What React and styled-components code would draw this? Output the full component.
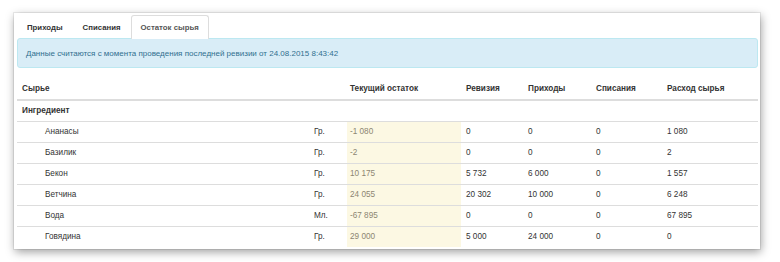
import styled, { createGlobalStyle } from "styled-components";
import { useState } from "react";

const GlobalStyle = createGlobalStyle`
  html, body {
    margin: 0;
    padding: 0;
    background: #fff;
  }
  body {
    font-family: "Liberation Sans", Arial, Helvetica, sans-serif;
    font-size: 8.2px;
    color: #333;
  }
`;

const Page = styled.div`
  padding: 13px 20px 0 14px;
  height: 262px;
  box-sizing: border-box;
  overflow: hidden;
`;

const Card = styled.div`
  width: 746px;
  height: 236px;
  box-sizing: border-box;
  background: #fff;
  padding: 0 2px 0 3px;
  overflow: hidden;
  box-shadow: 0 0 0 1px rgba(0, 0, 0, 0.07), 1px 3px 9px rgba(0, 0, 0, 0.38);
`;

const Tabs = styled.ul`
  display: flex;
  list-style: none;
  margin: 0;
  padding: 2px 0 0 0;
  height: 25px;
  box-sizing: border-box;
  gap: 0;
`;

const Tab = styled.li`
  display: flex;
  align-items: center;
  padding: 0 9px;
  font-size: 7.8px;
  font-weight: bold;
  cursor: pointer;
  color: ${(p) => (p.$active ? "#555" : "#333")};
  background: ${(p) => (p.$active ? "#fff" : "transparent")};
  border: 1px solid ${(p) => (p.$active ? "#ddd" : "transparent")};
  border-bottom: none;
  border-radius: 3px 3px 0 0;
  margin-bottom: -1px;
  position: relative;
  z-index: 1;
`;

const Alert = styled.div`
  height: 30px;
  box-sizing: border-box;
  display: flex;
  align-items: center;
  padding: 0 8px;
  font-size: 8px;
  background: #d9edf7;
  border: 1px solid #bce8f1;
  border-radius: 3px;
  color: #31708f;
`;

const Table = styled.table`
  width: 100%;
  margin-top: 10px;
  border-collapse: collapse;
  table-layout: fixed;
`;

const HeadCell = styled.th`
  height: 21px;
  padding: 0 0 0 ${(p) => p.$pad || 5}px;
  text-align: left;
  font-weight: bold;
  border-bottom: 2px solid #ddd;
  vertical-align: middle;
`;

const Row = styled.tr`
  height: 21px;
  border-top: 1px solid #ddd;
`;

const Cell = styled.td`
  padding: 0 0 0 ${(p) => p.$pad || 5}px;
  vertical-align: middle;
  white-space: nowrap;
  font-weight: ${(p) => (p.$bold ? "bold" : "normal")};
  background: ${(p) => (p.$warn ? "#fcf8e3" : "transparent")};
  color: ${(p) => (p.$warn ? "#8c8672" : "#333")};
`;

const tabs = ["Приходы", "Списания", "Остаток сырья"];

const rows = [
  { name: "Ананасы", unit: "Гр.", stock: "-1 080", rev: "0", inc: "0", off: "0", use: "1 080" },
  { name: "Базилик", unit: "Гр.", stock: "-2", rev: "0", inc: "0", off: "0", use: "2" },
  { name: "Бекон", unit: "Гр.", stock: "10 175", rev: "5 732", inc: "6 000", off: "0", use: "1 557" },
  { name: "Ветчина", unit: "Гр.", stock: "24 055", rev: "20 302", inc: "10 000", off: "0", use: "6 248" },
  { name: "Вода", unit: "Мл.", stock: "-67 895", rev: "0", inc: "0", off: "0", use: "67 895" },
  { name: "Говядина", unit: "Гр.", stock: "29 000", rev: "5 000", inc: "24 000", off: "0", use: "0" },
];

export default function App() {
  const [active, setActive] = useState(2);

  return (
    <Page>
      <GlobalStyle />
      <Card>
        <Tabs>
          {tabs.map((t, i) => (
            <Tab key={t} $active={i === active} onClick={() => setActive(i)}>
              {t}
            </Tab>
          ))}
        </Tabs>
        <Alert>
          Данные считаются с момента проведения последней ревизии от 24.08.2015 8:43:42
        </Alert>
        <Table>
          <colgroup>
            <col style={{ width: 292 }} />
            <col style={{ width: 38 }} />
            <col style={{ width: 114 }} />
            <col style={{ width: 62 }} />
            <col style={{ width: 68 }} />
            <col style={{ width: 71 }} />
            <col />
          </colgroup>
          <thead>
            <tr>
              <HeadCell colSpan={2}>Сырье</HeadCell>
              <HeadCell $pad={3}>Текущий остаток</HeadCell>
              <HeadCell>Ревизия</HeadCell>
              <HeadCell>Приходы</HeadCell>
              <HeadCell>Списания</HeadCell>
              <HeadCell>Расход сырья</HeadCell>
            </tr>
          </thead>
          <tbody>
            <Row>
              <Cell $bold colSpan={7}>Ингредиент</Cell>
            </Row>
            {rows.map((r) => (
              <Row key={r.name}>
                <Cell $pad={28}>{r.name}</Cell>
                <Cell>{r.unit}</Cell>
                <Cell $warn $pad={3}>{r.stock}</Cell>
                <Cell>{r.rev}</Cell>
                <Cell>{r.inc}</Cell>
                <Cell>{r.off}</Cell>
                <Cell>{r.use}</Cell>
              </Row>
            ))}
          </tbody>
        </Table>
      </Card>
    </Page>
  );
}
